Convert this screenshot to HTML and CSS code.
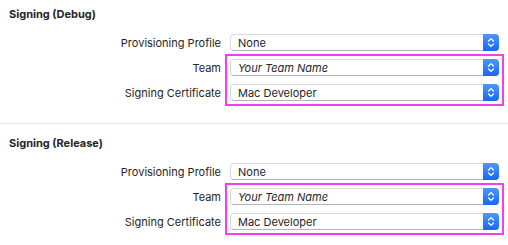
FILE: index.html
```html
<!DOCTYPE html>
<html>
<head>
  <title>Signing</title>
  <link rel="stylesheet" href="styles.css">
</head>
<body>
  <section class="section">
    <h2 class="sectionTitle">Signing (Debug)</h2>
    <div class="fields">
      <label class="fieldLabel row1">Provisioning Profile</label>
      <div class="popup row1">
        <span class="popupValue">None</span>
        <span class="stepper"><svg viewBox="0 0 16 17" width="16" height="17"><path d="M5.5 7 L8 4.6 L10.5 7 M5.5 10 L8 12.4 L10.5 10" /></svg></span>
      </div>

      <div class="highlight"></div>

      <label class="fieldLabel row2">Team</label>
      <div class="popup row2">
        <span class="popupValue placeholder">Your Team Name</span>
        <span class="stepper"><svg viewBox="0 0 16 17" width="16" height="17"><path d="M5.5 7 L8 4.6 L10.5 7 M5.5 10 L8 12.4 L10.5 10" /></svg></span>
      </div>

      <label class="fieldLabel row3">Signing Certificate</label>
      <div class="popup row3">
        <span class="popupValue">Mac Developer</span>
        <span class="stepper"><svg viewBox="0 0 16 17" width="16" height="17"><path d="M5.5 7 L8 4.6 L10.5 7 M5.5 10 L8 12.4 L10.5 10" /></svg></span>
      </div>
    </div>
  </section>

  <section class="section">
    <h2 class="sectionTitle">Signing (Release)</h2>
    <div class="fields">
      <label class="fieldLabel row1">Provisioning Profile</label>
      <div class="popup row1">
        <span class="popupValue">None</span>
        <span class="stepper"><svg viewBox="0 0 16 17" width="16" height="17"><path d="M5.5 7 L8 4.6 L10.5 7 M5.5 10 L8 12.4 L10.5 10" /></svg></span>
      </div>

      <div class="highlight"></div>

      <label class="fieldLabel row2">Team</label>
      <div class="popup row2">
        <span class="popupValue placeholder">Your Team Name</span>
        <span class="stepper"><svg viewBox="0 0 16 17" width="16" height="17"><path d="M5.5 7 L8 4.6 L10.5 7 M5.5 10 L8 12.4 L10.5 10" /></svg></span>
      </div>

      <label class="fieldLabel row3">Signing Certificate</label>
      <div class="popup row3">
        <span class="popupValue">Mac Developer</span>
        <span class="stepper"><svg viewBox="0 0 16 17" width="16" height="17"><path d="M5.5 7 L8 4.6 L10.5 7 M5.5 10 L8 12.4 L10.5 10" /></svg></span>
      </div>
    </div>
  </section>
</body>
</html>
```

FILE: styles.css
```css
body {
  margin: 0;
  background-color: #ffffff;
  font-family: "Inter", "Noto Sans", sans-serif;
  font-size: 11px;
  color: #262626;
}

.section {
  padding: 12px 0 22px 9px;
  border-top: 1px solid #e3e3e3;
}

.section:first-child {
  padding-top: 7px;
  border-top: none;
}

.sectionTitle {
  margin: 0 0 13px 0;
  font-size: 11px;
  line-height: 14px;
  font-weight: 700;
}

.fields {
  display: grid;
  grid-template-columns: 212px 269px;
  grid-auto-rows: 17px;
  column-gap: 9px;
  row-gap: 8px;
  align-items: center;
}

.row1 { grid-row: 1; }
.row2 { grid-row: 2; }
.row3 { grid-row: 3; }

.fieldLabel {
  grid-column: 1;
  text-align: right;
  line-height: 14px;
}

/* contorno magenta em volta de Team e Signing Certificate */
.highlight {
  grid-column: 2;
  grid-row: 2 / 4;
  align-self: stretch;
  outline: 2px solid #f33ff0;
  outline-offset: 3px;
}

.popup {
  grid-column: 2;
  height: 17px;
  box-sizing: border-box;
  display: flex;
  align-items: center;
  background-color: #ffffff;
  border: 1px solid #d9d9d9;
  border-bottom-color: #b4b4b4;
  border-radius: 4px;
  position: relative;
}

.popupValue {
  flex: 1;
  padding-left: 7px;
  line-height: 14px;
  white-space: nowrap;
}

.placeholder {
  font-style: italic;
}

.stepper {
  width: 16px;
  height: 17px;
  margin: -1px -1px -1px 0;
  border-radius: 0 4px 4px 0;
  background: linear-gradient(#4d98fb, #1a66f3);
  display: flex;
}

.stepper path {
  fill: none;
  stroke: #ffffff;
  stroke-width: 1.3;
  stroke-linecap: round;
  stroke-linejoin: round;
}
```
